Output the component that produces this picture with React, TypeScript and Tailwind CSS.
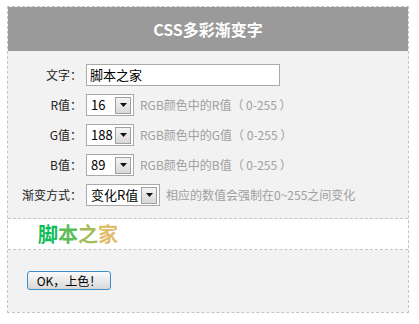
import React from 'react';

const font = { fontFamily: '"Noto Sans CJK SC", "Noto Sans", sans-serif' };

const Arrow: React.FC = () => (
  <div className="flex h-[17px] w-[16px] items-center justify-center border border-[#a0a0a0] bg-gradient-to-b from-[#f4f4f4] to-[#d8d8d8]">
    <svg width="7" height="4" viewBox="0 0 7 4">
      <polygon points="0,0 7,0 3.5,4" fill="#111" />
    </svg>
  </div>
);

const FakeSelect: React.FC<{ value: string; width: string }> = ({ value, width }) => (
  <div className={`flex h-[22px] ${width} items-center justify-between border border-[#a9a9a9] bg-white pl-[4px] pr-[2px] text-[13px] text-black`}>
    <span>{value}</span>
    <Arrow />
  </div>
);

const Row: React.FC<{ label: string; children: React.ReactNode }> = ({ label, children }) => (
  <div className="flex h-[22px] items-center">
    <div className="w-[78px] pr-[4px] text-right text-[12px] text-[#222]">{label}</div>
    {children}
  </div>
);

const App: React.FC = () => {
  const rgb = [
    { label: 'R值：', value: '16', key: 'R' },
    { label: 'G值：', value: '188', key: 'G' },
    { label: 'B值：', value: '89', key: 'B' },
  ];
  const chars = [
    { c: '脚', color: '#10bc59' },
    { c: '本', color: '#5cbc59' },
    { c: '之', color: '#a4bc59' },
    { c: '家', color: '#e2bc6a' },
  ];

  return (
    <div className="min-h-[324px] w-[419px] bg-white pt-[6px]" style={font}>
      <div className="ml-[7px] w-[402px] border border-dashed border-[#c4c4c4]">
        <div className="flex h-[44px] items-center justify-center bg-[#9a9a9a] text-[16px] font-bold text-white">
          CSS多彩渐变字
        </div>

        <div className="flex flex-col gap-[8px] border-b border-dashed border-[#c4c4c4] bg-[#f2f2f2] pb-[12px] pt-[13px]">
          <Row label="文字：">
            <div className="flex h-[22px] w-[194px] items-center border border-[#a9a9a9] bg-white pl-[3px] text-[13px] text-black">
              脚本之家
            </div>
          </Row>
          {rgb.map(r => (
            <Row key={r.key} label={r.label}>
              <FakeSelect value={r.value} width="w-[48px]" />
              <span className="ml-[6px] text-[12px] text-[#a0a0a0]">RGB颜色中的{r.key}值（ 0-255 ）</span>
            </Row>
          ))}
          <Row label="渐变方式：">
            <FakeSelect value="变化R值" width="w-[74px]" />
            <span className="ml-[6px] text-[12px] text-[#a0a0a0]">相应的数值会强制在0~255之间变化</span>
          </Row>
        </div>

        <div className="flex h-[31px] items-center border-b border-dashed border-[#c4c4c4] bg-white pl-[30px] text-[20px] font-bold">
          {chars.map(ch => (
            <span key={ch.c} style={{ color: ch.color }}>{ch.c}</span>
          ))}
        </div>

        <div className="h-[62px] bg-[#f2f2f2] pl-[19px] pt-[21px]">
          <button className="flex h-[19px] w-[84px] items-center justify-center rounded-[3px] border border-[#3d8fcc] bg-gradient-to-b from-[#fafafa] to-[#d9d9d9] text-[12px] text-black">
            OK，上色！
          </button>
        </div>
      </div>
    </div>
  );
};

export default App;
